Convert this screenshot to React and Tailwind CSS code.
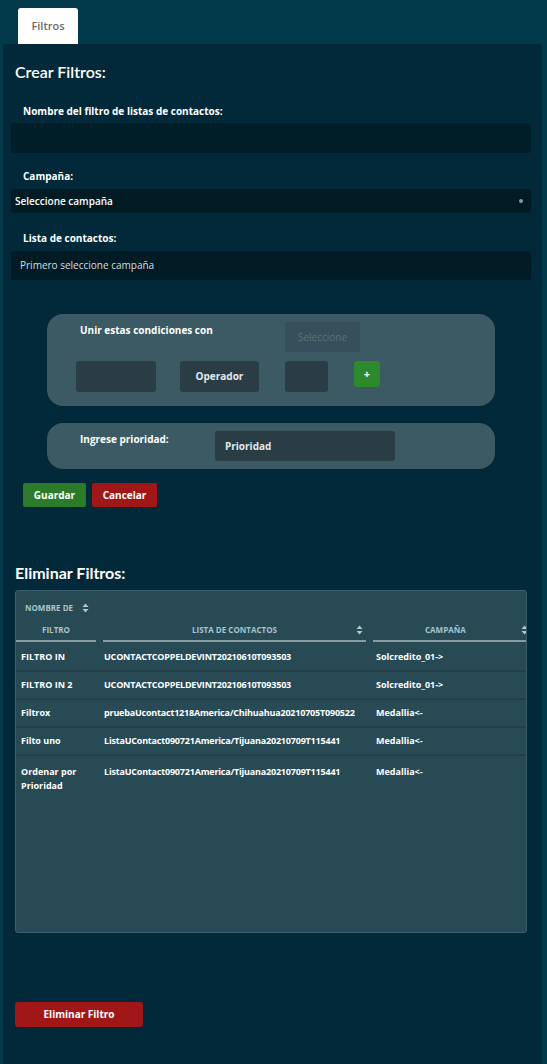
import React from 'react';

const rows = [
  { name: 'FILTRO IN', list: 'UCONTACTCOPPELDEVINT20210610T093503', camp: 'Solcredito_01->' },
  { name: 'FILTRO IN 2', list: 'UCONTACTCOPPELDEVINT20210610T093503', camp: 'Solcredito_01->' },
  { name: 'Filtrox', list: 'pruebaUcontact1218America/Chihuahua20210705T090522', camp: 'Medallia<-' },
  { name: 'Filto uno', list: 'ListaUContact090721America/Tijuana20210709T115441', camp: 'Medallia<-' },
  { name: 'Ordenar por Prioridad', list: 'ListaUContact090721America/Tijuana20210709T115441', camp: 'Medallia<-' },
];

const SortIcon = () => (
  <svg width="7" height="10" viewBox="0 0 7 10" className="shrink-0">
    <path d="M3.5 0.5 L6.5 4 H0.5 Z" fill="#b8c6ca" />
    <path d="M3.5 9.5 L6.5 6 H0.5 Z" fill="#b8c6ca" />
  </svg>
);

export default function App() {
  return (
    <div
      className="w-[547px] h-[1064px] bg-[#023a4c] overflow-hidden flex flex-col"
      style={{ fontFamily: '"Open Sans", Lato, sans-serif' }}
    >
      {/* Tab bar */}
      <div className="pt-2 pl-[18px] flex">
        <div className="w-[60px] h-[36px] bg-white rounded-t-[3px] flex items-center justify-center text-[11px] font-semibold text-[#6b6b6b]">
          Filtros
        </div>
      </div>

      {/* Panel */}
      <div className="mx-[3px] mr-[5px] flex-1 bg-[#01293a] rounded-t-[3px] pt-[18px] px-2">
        <h2 className="pl-1 text-[16px] text-white font-semibold leading-5" style={{ fontFamily: 'Lato, sans-serif' }}>
          Crear Filtros:
        </h2>

        <div className="mt-[23px] pl-[12px] text-[10px] font-bold text-white leading-3">
          Nombre del filtro de listas de contactos:
        </div>
        <div className="mt-[6px] mr-[3px] h-[30px] rounded-[3px] bg-[#001e28]" />

        <div className="mt-[17px] pl-[12px] text-[10px] font-bold text-white leading-3">Campaña:</div>
        <div className="mt-[7px] mr-[3px] h-[24px] rounded-[3px] bg-[#001b24] flex items-center justify-between pl-1 pr-[8px]">
          <span className="text-[10px] font-semibold text-white">Seleccione campaña</span>
          <span className="w-[4px] h-[4px] rounded-full bg-[#8a9aa0]" />
        </div>

        <div className="mt-[19px] pl-[12px] text-[10px] font-bold text-white leading-3">Lista de contactos:</div>
        <div className="mt-[7px] mr-[3px] h-[29px] rounded-[3px] bg-[#001b24] flex items-center pl-[9px]">
          <span className="text-[10px] text-[#d8dee0]">Primero seleccione campaña</span>
        </div>

        {/* Conditions box */}
        <div className="mt-[34px] ml-[36px] w-[448px] h-[92px] rounded-[16px] bg-[#3c5a63] pl-[33px] pt-[8px]">
          <div className="flex">
            <div className="w-[205px] pt-[2px] text-[10px] font-bold text-white leading-3">Unir estas condiciones con</div>
            <div className="w-[75px] h-[30px] rounded-[3px] bg-[#35505a] flex items-center justify-center text-[10px] text-[#58727a]">
              Seleccione
            </div>
          </div>
          <div className="mt-[9px] -ml-[4px] flex items-start">
            <div className="w-[80px] h-[31px] rounded-[3px] bg-[#2a3d45]" />
            <div className="ml-[24px] w-[79px] h-[31px] rounded-[3px] bg-[#2a3d45] flex items-center justify-center text-[10px] font-bold text-[#e3e8ea]">
              Operador
            </div>
            <div className="ml-[26px] w-[43px] h-[31px] rounded-[3px] bg-[#2a3d45]" />
            <button className="ml-[26px] w-[26px] h-[26px] rounded-[3px] bg-[#2c8a2c] text-white text-[11px] font-bold flex items-center justify-center">
              +
            </button>
          </div>
        </div>

        {/* Priority box */}
        <div className="mt-[17px] ml-[36px] w-[448px] h-[46px] rounded-[16px] bg-[#3c5a63] pl-[33px] pt-[8px] flex">
          <div className="w-[135px] pt-[2px] text-[10px] font-bold text-white leading-3">Ingrese prioridad:</div>
          <div className="w-[180px] h-[30px] rounded-[3px] bg-[#2a3d45] flex items-center pl-[10px] text-[10px] font-bold text-[#e3e8ea]">
            Prioridad
          </div>
        </div>

        <div className="mt-[14px] ml-[12px] flex gap-[6px]">
          <button className="w-[63px] h-[24px] rounded-[2px] bg-[#2b7b2b] text-[10px] font-bold text-white">Guardar</button>
          <button className="w-[65px] h-[24px] rounded-[2px] bg-[#a11717] text-[10px] font-bold text-white">Cancelar</button>
        </div>

        <h2 className="mt-[56px] pl-1 text-[16px] text-white font-bold leading-5" style={{ fontFamily: 'Lato, sans-serif' }}>
          Eliminar Filtros:
        </h2>

        {/* Table card */}
        <div className="mt-[7px] ml-1 w-[512px] h-[343px] rounded-[3px] bg-[#284a55] border border-[#3a5f6a] overflow-hidden">
          <div className="w-[540px]">
            <div className="flex flex-col">
              <div className="pt-[11px] pl-[9px] flex items-center gap-[9px] text-[8px] font-bold text-[#a8c3cb] leading-3">
                NOMBRE DE <SortIcon />
              </div>
              <div className="flex mt-[10px] text-[8px] font-bold text-[#a8c3cb]">
                <div className="w-[80px] mr-[7px] border-b-2 border-[#849ca2] h-[18px] flex justify-center items-start">
                  FILTRO
                </div>
                <div className="w-[263px] mr-[7px] border-b-2 border-[#849ca2] h-[18px] relative flex justify-center items-start">
                  LISTA DE CONTACTOS
                  <span className="absolute right-[3px] top-[1px]"><SortIcon /></span>
                </div>
                <div className="w-[183px] border-b-2 border-[#849ca2] h-[18px] relative flex items-start pl-[52px]">
                  CAMPAÑA
                  <span className="absolute right-[28px] top-[1px]"><SortIcon /></span>
                </div>
              </div>
            </div>
            <div className="mt-[2px]">
              {rows.map((r, i) => {
                const last = i === rows.length - 1;
                return (
                  <div
                    key={i}
                    className={
                      last
                        ? 'flex h-[44px] pt-[9px] text-[9px] font-bold text-white leading-[14px]'
                        : 'flex h-[28px] items-center border-b-2 border-[#21404a] text-[9px] font-bold text-white leading-[14px]'
                    }
                  >
                    <div className="w-[87px] pl-[5px]">
                      {last ? (
                        <>
                          Ordenar por
                          <br />
                          Prioridad
                        </>
                      ) : (
                        r.name
                      )}
                    </div>
                    <div className="w-[272px] pl-[1px] whitespace-nowrap tracking-[-0.2px]">{r.list}</div>
                    <div className="pl-[1px] whitespace-nowrap">{r.camp}</div>
                  </div>
                );
              })}
            </div>
          </div>
        </div>

        <button className="mt-[69px] ml-1 w-[128px] h-[25px] rounded-[3px] bg-[#a11717] text-[10px] font-bold text-white">
          Eliminar Filtro
        </button>
      </div>
    </div>
  );
}
